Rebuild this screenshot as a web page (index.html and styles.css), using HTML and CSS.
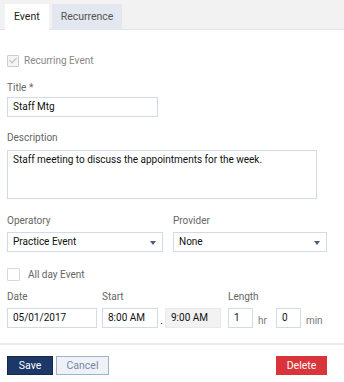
FILE: index.html
```html
<!DOCTYPE html>
<html lang="en">
<head>
    <meta charset="UTF-8">
    <title>Edit Event</title>
    <link rel="stylesheet" href="styles.css">
</head>
<body>
    <div class="tabs">
        <div class="tab active">Event</div>
        <div class="tab">Recurrence</div>
    </div>

    <form class="content">
        <label class="check disabled">
            <span class="box checked"></span>
            Recurring Event
        </label>

        <div class="form-group title">
            <label>Title *</label>
            <div class="input title-input">Staff Mtg</div>
        </div>

        <div class="form-group desc">
            <label>Description</label>
            <div class="input textarea">Staff meeting to discuss the appointments for the week.</div>
        </div>

        <div class="row selects">
            <div class="form-group op">
                <label>Operatory</label>
                <div class="input select">Practice Event<span class="caret"></span></div>
            </div>
            <div class="form-group prov">
                <label>Provider</label>
                <div class="input select">None<span class="caret"></span></div>
            </div>
        </div>

        <label class="check allday">
            <span class="box"></span>
            All day Event
        </label>

        <div class="row when">
            <div class="form-group">
                <label>Date</label>
                <div class="input date">05/01/2017</div>
            </div>
            <div class="form-group start">
                <label>Start</label>
                <div class="times">
                    <div class="input time">8:00 AM</div>
                    <span class="dot">.</span>
                    <div class="input time readonly">9:00 AM</div>
                </div>
            </div>
            <div class="form-group length">
                <label>Length</label>
                <div class="times">
                    <div class="input small">1</div>
                    <span class="unit hr">hr</span>
                    <div class="input small">0</div>
                    <span class="unit">min</span>
                </div>
            </div>
        </div>
    </form>

    <div class="footer">
        <button class="btn save">Save</button>
        <button class="btn cancel">Cancel</button>
        <button class="btn delete">Delete</button>
    </div>
</body>
</html>
```

FILE: styles.css
```css
body {
    margin: 0;
    font-family: Roboto, 'Liberation Sans', sans-serif;
    font-size: 10px;
    color: #222;
    background: #fff;
}
.tabs {
    display: flex;
    gap: 3px;
    height: 25px;
    padding: 4px 0 0 5px;
    background: #f2f2f2;
    border-bottom: 1px solid #e3e5ee;
}
.tab {
    height: 25px;
    line-height: 25px;
    padding: 0 9px;
    font-size: 10.5px;
    color: #555;
    background: #e3e7ef;
}
.tab.active {
    height: 26px;
    background: #fff;
    color: #222;
}
.content {
    padding: 25px 7px 0;
}
label {
    display: block;
    font-size: 10px;
    line-height: 12px;
    color: #666;
    margin-bottom: 5px;
}
.check {
    display: flex;
    align-items: center;
    gap: 5px;
    margin: 0;
}
.check.disabled {
    color: #888;
}
.box {
    width: 10px;
    height: 10px;
    border: 1px solid #ccc;
    border-radius: 1px;
    position: relative;
}
.box.checked {
    background: #f4f4f4;
}
.box.checked::after {
    content: '';
    position: absolute;
    left: 3px;
    top: 0;
    width: 3px;
    height: 6px;
    border: solid #bbb;
    border-width: 0 1.5px 1.5px 0;
    transform: rotate(45deg);
}
.form-group {
    margin-top: 15px;
}
.title label {
    margin-bottom: 3px;
}
.desc label {
    margin-bottom: 6px;
}
.input {
    box-sizing: border-box;
    height: 20px;
    line-height: 18px;
    padding: 0 5px;
    border: 1px solid #cfdbe6;
    background: #fff;
    font-size: 10px;
    color: #111;
}
.title-input {
    width: 151px;
}
.textarea {
    width: 310px;
    height: 49px;
    line-height: 15px;
    padding-top: 1px;
}
.row {
    display: flex;
}
.selects .form-group {
    margin-top: 16px;
}
.op {
    width: 156px;
    margin-right: 10px;
}
.prov {
    width: 154px;
}
.select {
    position: relative;
}
.caret {
    position: absolute;
    right: 6px;
    top: 8px;
    border-left: 3.5px solid transparent;
    border-right: 3.5px solid transparent;
    border-top: 4px solid #4b5d78;
}
.allday {
    margin-top: 16px;
    gap: 8px;
    color: #666;
}
.allday .box {
    width: 11px;
    height: 11px;
    border-color: #d8d8d8;
}
.when .form-group {
    margin-top: 10px;
}
.when label {
    margin-bottom: 5px;
}
.date {
    width: 90px;
}
.when .start {
    margin-left: 5px;
}
.times {
    display: flex;
    align-items: center;
}
.time {
    width: 56px;
}
.readonly {
    background: #f2f2f2;
    border-color: #eaeaea;
}
.dot {
    width: 7px;
    text-align: center;
    padding-top: 4px;
}
.when .length {
    margin-left: 7px;
}
.small {
    width: 25px;
}
.unit {
    color: #777;
    padding: 4px 5px 0;
}
.unit.hr {
    padding-right: 9px;
}
.footer {
    display: flex;
    gap: 3px;
    margin-top: 15px;
    padding: 11px 7px 0;
    border-top: 2px solid #ececec;
}
.btn {
    height: 19px;
    padding: 0;
    font-family: Roboto, 'Liberation Sans', sans-serif;
    font-size: 10.5px;
    border: 1px solid transparent;
    cursor: pointer;
}
.save {
    width: 46px;
    background: #1d3767;
    border-color: #15294d;
    color: #fff;
}
.cancel {
    width: 53px;
    background: #eef2f8;
    border-color: #9fb3c8;
    color: #7688a0;
}
.delete {
    width: 51px;
    margin-left: auto;
    margin-right: 10px;
    background: #d9343a;
    color: #fff;
}
```
